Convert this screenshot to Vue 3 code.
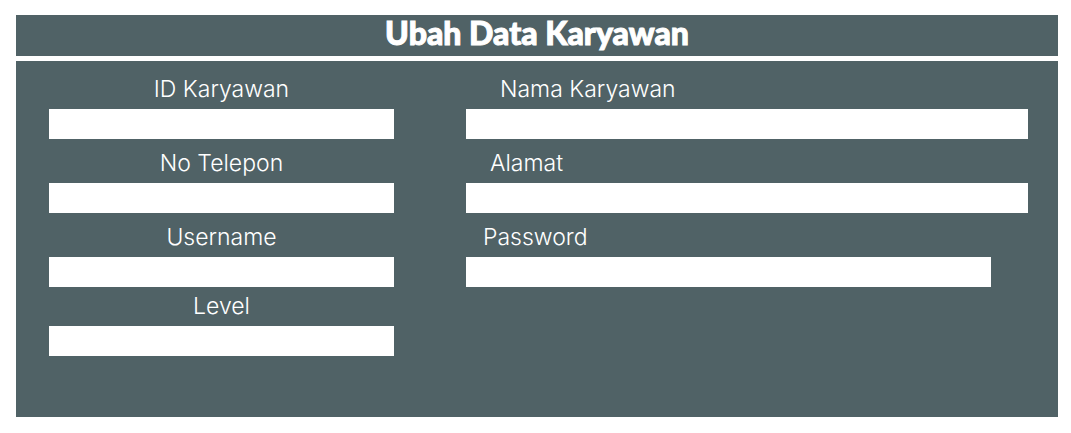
<script setup>
import { reactive } from 'vue'

const form = reactive({
  id: '',
  phone: '',
  username: '',
  level: '',
  name: '',
  address: '',
  password: ''
})

const accountFields = [
  { key: 'id', label: 'ID Karyawan', type: 'text' },
  { key: 'phone', label: 'No Telepon', type: 'tel' },
  { key: 'username', label: 'Username', type: 'text' },
  { key: 'level', label: 'Level', type: 'text' }
]

const personalFields = [
  { key: 'name', label: 'Nama Karyawan', type: 'text' },
  { key: 'address', label: 'Alamat', type: 'text' },
  { key: 'password', label: 'Password', type: 'password' }
]
</script>

<template>
  <main class="page">
    <header class="bar">
      <h1 class="title">Ubah Data Karyawan</h1>
    </header>
    <form class="panel" @submit.prevent>
      <div class="column centered">
        <div v-for="f in accountFields" :key="f.key" class="field" :class="f.key">
          <label :for="f.key">{{ f.label }}</label>
          <input :id="f.key" v-model="form[f.key]" :type="f.type" autocomplete="off" />
        </div>
      </div>
      <div class="column">
        <div v-for="f in personalFields" :key="f.key" class="field" :class="f.key">
          <label :for="f.key">{{ f.label }}</label>
          <input :id="f.key" v-model="form[f.key]" :type="f.type" autocomplete="off" />
        </div>
      </div>
    </form>
  </main>
</template>

<style>
body {
  margin: 0;
  background: #fff;
}
</style>

<style scoped>
.page {
  display: flex;
  flex-direction: column;
  gap: 5px;
  padding: 15px 13px 16px 16px;
  color: #fff;
  font-family: Inter, "Liberation Sans", sans-serif;
}

.bar {
  background: #506266;
  padding-bottom: 5px;
}

.title {
  margin: 0;
  font-family: Lato, "Open Sans", sans-serif;
  font-size: 32px;
  font-weight: 900;
  line-height: 36px;
  text-align: center;
  -webkit-text-stroke: 1px #fff;
  stroke-linejoin: round;
}

.panel {
  display: grid;
  grid-template-columns: 345fr 562fr;
  column-gap: 72px;
  padding: 14px 30px 61px 33px;
  background: #506266;
}

.column {
  display: flex;
  flex-direction: column;
  gap: 10px;
}

.field {
  display: flex;
  flex-direction: column;
  gap: 6px;
}

label {
  font-size: 23px;
  font-weight: 300;
  line-height: 28px;
}

.centered label {
  text-align: center;
}

input {
  box-sizing: border-box;
  width: 100%;
  height: 30px;
  margin: 0;
  padding: 0 8px;
  border: 0;
  border-radius: 0;
  background: #fff;
  color: #506266;
  font: inherit;
  font-size: 18px;
}

.level {
  margin-top: -5px;
}

.name label {
  padding-left: 34px;
}

.address label {
  padding-left: 24px;
}

.password label {
  padding-left: 17px;
}

.password {
  margin-right: 37px;
}
</style>
